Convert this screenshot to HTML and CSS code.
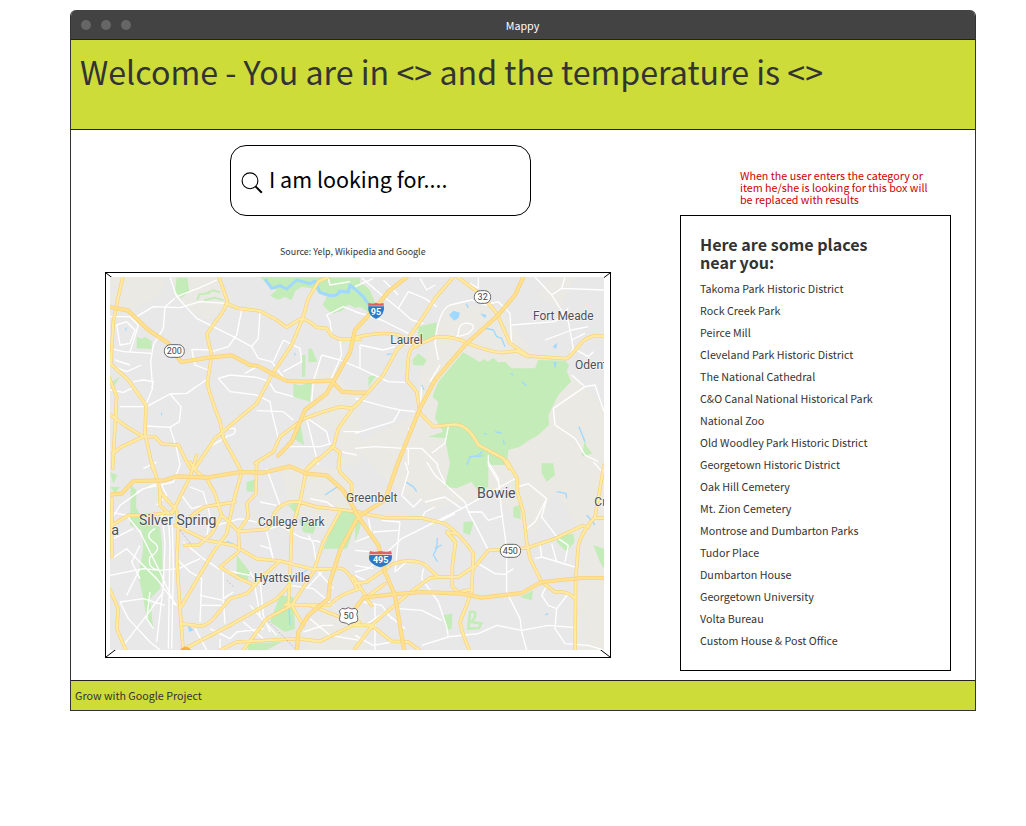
FILE: index.html
```html
<!DOCTYPE html>
<html lang="en">
<head>
<meta charset="utf-8">
<title>Mappy</title>
<link rel="stylesheet" href="styles.css">
</head>
<body>
<div class="window">
  <div class="titlebar">
    <div class="dots"><i class="dot"></i><i class="dot"></i><i class="dot"></i></div>
    <span class="window-title">Mappy</span>
  </div>
  <header class="banner"><h1 class="welcome">Welcome - You are in &lt;&gt; and the temperature is &lt;&gt;</h1></header>
  <main class="content">
    <section class="left">
      <div class="search">
        <svg class="search-icon" width="22" height="22" viewBox="0 0 22 22"><circle cx="9" cy="8.8" r="7.9" fill="none" stroke="#000" stroke-width="1.1"/><path d="M14.5 14.4L20.8 20.7" stroke="#000" stroke-width="2"/></svg>
        <span class="search-text">I am looking for....</span>
      </div>
      <p class="source">Source: Yelp, Wikipedia and Google</p>
      <div class="map-frame">
        <svg class="map" width="504" height="384" viewBox="0 0 504 384">
          <path d="M0 0L504 384M0 384L504 0" stroke="#000" stroke-width="1"/>
          <svg x="4" y="4" width="494" height="373" viewBox="30 36 1482 1119">
            <defs>
              <g id="roads">
                <path d="M70 30L55 95 40 170 33 290M355 30L382 108Q370 145 350 165L320 208 335 270 322 355Q325 375 345 430L360 470 370 520 420 610M378 115L415 130 480 138 530 165 560 187 600 162Q620 160 650 187L680 190 695 212 720 223H780M685 36L655 50 625 100 608 160 575 240 515 330 470 415 345 520 285 610M25 290L85 345 138 420 135 505 158 610M25 330L50 395 45 480 38 610M25 445L80 485 130 515 165 515 185 537 235 540 270 610M38 565L65 545 130 515M780 410L755 430 720 425 665 442 610 462 540 515 520 560 465 595M755 435L715 490 700 545 625 610M695 545L720 562 715 610"/>
                <g transform="translate(765 0)"><path d="M0 218Q80 198 130 210L185 240Q200 235 240 217Q290 210 345 237Q400 260 440 263L485 258 520 275M0 425L85 330 125 255 160 220 205 155 240 100 295 36M300 30L380 90 425 145 465 235 520 273 635 281Q650 270 675 238T747 214M185 245Q165 240 160 280L155 345 185 380 195 445 235 485 300 478Q340 480 370 540L445 580 462 610"/></g>
                <g transform="translate(0 591)"><path d="M36 110V285M155 0L180 80V130L205 155M180 90L230 145M35 190L85 160 140 160 220 150M290 -20L270 45 230 125 215 155M270 0L290 30 320 50 345 95 365 160 415 208 418 265M410 0L425 30 400 120 380 215 340 270 240 440M470 0L468 95 440 125 445 165 415 208 490 203Q515 200 520 160Q540 115 600 120L650 135 780 150M650 -10L620 20 600 120 575 200 570 340 565 430M715 0L720 30 755 65V110M230 150L235 200 230 290 240 440 250 570M225 190L320 235 400 250 470 290 540 297 640 322 710 320Q740 310 770 380M255 250H295L335 215 365 160M270 165L310 135 405 120M415 270L360 315 420 350 465 370 440 395 390 410 340 470Q310 500 285 490L245 485M255 560L390 490 530 410Q570 370 570 360M540 297L480 350 465 370M350 570L410 540 590 530M595 530L660 538 780 480M720 150L670 240 640 330 575 430 500 470 430 564M555 428L690 430Q710 400 780 380M575 430L610 490M630 430L720 465 780 490M28 380L55 440 50 500 80 570"/></g>
                <g transform="translate(765 591)"><path d="M0 150L90 167 200 168 270 185Q320 220 355 275L350 390 315 480 325 520 345 570M302 215L275 210 302 240 292 310V375L310 390 350 383M455 -5L487 50V90L505 150 515 240 525 290 560 360 600 390Q640 385 660 410M355 320L400 265 440 263 515 258 600 230 680 192 700 195M747 10L720 165Q680 210 670 250L662 350 660 570M722 168H750M0 365L35 360 110 308Q165 285 210 308L250 345H310L355 315M250 345L225 348 160 395 60 480 0 560M0 490H50L110 538 160 540 200 570M-5 345L35 405M35 405L90 365M30 405L50 430"/></g>
              </g>
              <g id="highways">
                <path d="M25 125L85 137 145 195 205 235 230 275 245 291 330 277 395 271 450 300 475 303 515 325 560 348 620 350 695 347 725 380 765 383H795M920 36L865 80 825 130 765 195 750 262 700 350 680 385 615 435 575 530 535 572"/>
                <path d="M1270 36L1245 90 1195 150 1095 240 1005 345 960 430 895 591 855 705 775 755 720 856 690 951 685 1001 625 1051 595 1101 590 1165"/>
                <g transform="translate(0 591)"><path d="M30 98L65 95 100 57 195 55 230 43 320 47 420 30 490 32 570 13 620 35 680 40 730 85 780 170"/></g>
                <g transform="translate(765 591)"><path d="M0 150L70 250 90 330 120 400 148 570M0 440L25 407 110 397 200 390 320 395 380 407 500 393 560 360 680 348H750"/></g>
              </g>
            </defs>
            <rect x="30" y="36" width="1482" height="1119" fill="#e8e8e8"/>
            <g class="land">
              <path d="M210 36H355L380 110 330 165Q270 140 225 95ZM30 36H200L180 90 110 130 30 115ZM640 320H700L780 390V600H720V500L650 480Z"/>
              <path d="M1040 115L1200 130 1320 290 1400 590 1300 820 1190 690 1000 730 870 660 760 540 940 450 960 330Z"/>
              <path d="M1360 36H1425L1380 130 1310 90ZM1410 320L1512 430V1155H1430V780L1340 640 1290 560Z"/>
              <path d="M540 600L730 610 780 690 690 770 570 740ZM620 1070L790 1030 800 1155H620Z"/>
            </g>
            <g class="park">
              <path d="M230 38H262L268 80 245 98 225 80ZM480 36L780 38V125L765 128 745 118 725 138 695 146 668 120 680 95 660 88 645 72 605 65 585 78 575 106 555 95 535 104 510 92 530 75 505 62ZM110 215L125 222 135 215 155 228V252L110 250ZM625 252L635 250 652 290 625 292ZM606 270H616V335H606ZM580 355L600 362 635 352 630 410 580 395ZM600 470L612 540 580 520ZM30 355L60 335 45 360Z"/>
              <path d="M292 105L298 88 330 84M320 84L340 76 360 82M312 106L345 98 370 106" fill="none" stroke="#c3ecb8" stroke-width="6"/>
              <g transform="translate(765 0)"><path d="M0 50L20 55 45 75 75 150 45 145 0 115ZM190 185L245 172 240 212 208 230 188 210ZM172 285L190 265 215 285 205 302 175 300ZM40 335L65 330 40 365ZM325 262L375 292 385 282 398 290 415 278 430 292 450 290 470 310H540L550 285 630 287 642 300 635 318 648 350 610 390 580 450 550 510 515 530 495 545 460 555 455 600H400V665L370 680 350 650 305 670 270 665 285 595 270 520 220 515 265 500 240 460 250 410 232 395 250 350ZM690 525L695 545 712 565 680 575ZM580 445L582 480 550 510ZM560 595H595L600 630 575 650 560 625Z"/></g>
              <g transform="translate(0 591)"><path d="M92 70L110 85 108 135 130 180 180 195 185 235 188 330 180 380 150 410 160 500 140 470 130 410 115 340 130 260 125 205 90 190ZM30 30L52 40 40 65ZM30 75H60L45 92ZM440 60L465 52 460 90 440 88ZM565 130L600 120 595 165ZM595 170L650 185 640 215 610 210ZM715 150H780L740 260H670ZM410 280L450 330 440 360 410 345ZM540 400L580 405 585 500 555 510 510 480ZM440 545L545 540 500 564H445Z"/></g>
              <g transform="translate(765 591)"><path d="M0 180L20 160 15 200 0 240ZM325 180L357 178 345 218 325 212ZM475 135L497 128V172L475 165ZM605 220L655 215 658 240 635 270 605 240ZM715 250L747 260V320L735 300ZM495 405L535 385 530 415ZM262 460L292 455 290 500 275 505Z"/><path d="M345 450Q365 445 360 465L350 480 378 484 372 498 340 500Z" fill="none" stroke="#c3ecb8" stroke-width="8"/></g>
            </g>
            <g class="water"><path d="M495 42L515 70 540 62 560 72 590 45 630 56 645 48 660 82 690 92 710 90 720 78 745 82 750 60 765 72 790 95 810 125"/><path d="M875 266L860 269M1098 116L1105 128M1158 190L1180 195 1190 215 1205 220 1215 245M1012 818L1010 850 1000 870 1012 890M1005 850L1025 840M915 650L940 665 950 680M1233 325L1240 330M1265 350L1280 362M565 1000L570 1080M585 940L620 915M675 690L720 660M1370 680L1398 685 1400 700M1460 750L1485 780M1437 485L1455 530M965 360L972 375M1150 505L1160 507M1185 500L1205 505M1210 525L1213 538M1335 1050L1345 1046M380 828L400 838"/><path d="M1100 600L1110 575 1130 573 1148 560M1130 575L1150 572"/></g>
            <path d="M1047 150L1060 137 1080 143 1075 160 1062 167ZM1140 145L1160 150 1155 160ZM1358 245L1372 233 1368 252ZM1360 292L1370 290 1366 312ZM582 262L588 268 583 272ZM75 190L80 187 78 200ZM182 446L187 442 185 454ZM262 1080L282 1095 268 1100Z" fill="#a0d8ff"/>
            <g class="streets">
              <path d="M210 36L230 95 290 160 400 215 455 245 475 280 515 290 560 350M230 95L300 68 350 45M110 155L160 125 240 128 300 110 375 115M225 100L195 125 190 190 160 240 152 290 158 370 135 425M425 135L410 210 385 245 335 260M480 138L475 220 455 245M275 253L335 255M275 253L285 300 325 315M322 342L260 385 210 387 140 425M355 340L390 330 470 337 510 350M355 340L390 380 470 390 510 410 515 440 530 500 535 520M470 437L550 440 580 465M210 387L243 425 238 470 210 487 135 483M210 487L230 550 240 600M370 490L405 490Q410 510 385 512L330 545M550 225L600 250 605 290 550 320M550 225L520 290M720 225L725 270 690 350M665 270L640 350 635 410M665 270L720 285 780 310M620 462L640 540 655 600M625 462L680 500 690 540M555 545H660L695 535M30 155L90 155 115 180 100 230 90 260M50 180L80 170 105 195 90 235 60 240ZM30 250L70 260 155 265M30 300L80 320 125 300M30 375L70 382 95 370M60 425L130 425M130 345L160 350 155 370M100 350L130 345M690 170L680 150 730 125 780 145M690 170L695 210M730 500H780M720 560L770 570M510 355L525 380 580 395M435 325L480 300 515 325M45 285L90 300M685 42L690 60 750 50"/>
              <g transform="translate(765 0)"><path d="M20 38L80 90 130 130 170 165 205 175M130 130L160 80 210 100 245 125M195 40L215 75 240 60M0 140L80 165 160 205M0 65L55 40M85 45L130 90M15 240L85 255 120 245M15 240V310L100 350 150 352M0 400L90 425 135 435 180 440M135 435L115 470 0 505M0 550L60 545 145 550 200 550 250 600M280 485L270 535 230 565M160 550V600M310 215L340 205Q370 180 340 175T310 210L290 225M250 285L240 235Q250 135 285 120L350 105 390 120 430 110 465 145 470 240M225 350L255 300M540 36L590 90 640 170 655 250 700 275 715 260M590 90L620 70 747 75M630 36L620 70M470 180L600 170 640 130M570 225L650 195 700 185M655 250L640 280M690 365L595 430 600 480 660 520 690 570 730 590M690 365L720 360 747 440M200 365L195 430M650 225L690 205M650 330L690 365M370 36V70L345 55M160 490L170 500M400 570V600L430 650M245 600L270 655"/></g>
              <g transform="translate(0 591)"><path d="M30 150L80 160 120 210 180 330 225 430M30 340L130 320 180 325 235 320M35 290L80 260 170 350 230 430M30 235L100 200M170 130L200 100 185 70M185 145L195 240 190 370 170 540M205 160L210 250 205 560M217 190L220 320 215 560M60 420L130 410 195 430M60 420L85 470 150 540 180 564M70 550L140 460 190 390M80 400L120 320M165 200Q130 220 160 240Q190 260 150 285Q140 320 180 325M150 390L140 470 160 500M250 240L310 290 355 320 400 330 450 340M230 290L270 330 305 350 300 480M235 320L300 290M300 400L370 415 375 485M300 430H370M285 500L320 564M330 500L390 530 410 510 490 500M370 330V410L400 390M480 350L490 460 510 510M450 330L475 370M465 375L480 460M320 230L350 190 420 170 470 180M270 75L310 90 330 160 320 230M245 100L275 140 310 130M240 10L220 60 130 80 60 130M130 20L170 0M500 20L540 130M500 210L515 270 520 295M510 200L540 190 600 225 660 240M480 120L530 130M480 250L510 260 520 290M625 220L640 245 650 310M570 370L640 380 700 430M450 430L530 520M360 530V564M430 480L490 530M620 380L665 330M630 470L690 520 780 535M655 330L700 380M630 110L680 120 720 150M670 490H700M610 510L670 490M40 240L30 150M60 130L30 180M120 250L95 300 120 350M110 90L180 60"/></g>
              <g transform="translate(765 591)"><path d="M0 330L40 320 140 230 320 140 480 50M150 0L160 30 140 100 175 135 200 110M215 0L240 40 330 120 340 150 380 150 400 175 445 160M400 0L430 50 440 150 455 260 455 320M240 135L210 150 200 170M210 120L270 105 320 140M340 150L375 215 400 265M370 305L420 335 450 337 475 320M455 320V390L495 470 500 510 515 564M487 75L520 65 575 110 560 165 610 230 640 250M575 110L540 180 515 200M275 525L370 515 425 490 500 505 580 490 660 497M575 370L560 400 580 430 605 440 600 500 630 545 700 550 745 564M605 440L640 395M555 245L560 285 610 300 660 315M560 285L540 290M590 245L605 300M640 250L630 300M715 0L747 35M205 320L200 350 250 420 275 495 280 525 200 550M130 440L200 445 260 475M80 175L135 180 130 230 120 330M40 170L50 220 0 240M55 210L130 205M0 265L60 270M0 340L40 360M25 420L80 430 110 470M30 490L90 450 150 500M0 520L55 550 110 540M160 295L120 330M60 430V564M250 180L300 155M0 310L55 320"/></g>
            </g>
            <use href="#roads" class="casing minor-casing"/><use href="#roads" class="fill-road minor-fill"/>
            <use href="#highways" class="casing major-casing"/><use href="#highways" class="fill-major"/>
            <circle cx="257" cy="1163" r="18" fill="#fbb040"/>
            <path d="M240 795L275 840M380 945L400 965M505 1070L585 1150" stroke="#aaa" stroke-width="2" stroke-dasharray="6 5"/>
            <g class="shields">
              <rect x="193" y="239" width="60" height="38" rx="18"/><rect x="1123" y="77" width="49" height="38" rx="18"/><rect x="1201" y="838" width="61" height="39" rx="19"/>
              <path d="M726 1030Q735 1035 745 1028Q755 1035 766 1030L773 1038Q768 1048 773 1058Q776 1072 760 1073Q752 1074 746 1079Q740 1074 732 1073Q716 1072 719 1058Q724 1048 718 1038Z"/>
            </g>
            <g class="shield-text"><text x="223" y="268">200</text><text x="1148" y="106">32</text><text x="1231" y="867">450</text><text x="746" y="1062">50</text></g>
            <g class="interstate">
              <path d="M805 124H852Q855 150 828 162Q801 150 805 124Z" fill="#2d79c7"/><path d="M806 113Q817 118 828 113Q840 118 850 113L852 122H804Z" fill="#df6262"/>
              <path d="M808 870H875Q882 894 841 907Q800 894 808 870Z" fill="#2d79c7"/><path d="M810 858Q825 863 841 858Q858 863 873 858L876 868H807Z" fill="#df6262"/>
              <text x="828" y="151">95</text><text x="842" y="894">495</text>
            </g>
            <g class="place">
              <text x="871" y="238" textLength="97" lengthAdjust="spacingAndGlyphs">Laurel</text><text x="1299" y="164" textLength="182" lengthAdjust="spacingAndGlyphs">Fort Meade</text><text x="1425" y="313">Odenton</text>
              <text x="738" y="710" textLength="154" lengthAdjust="spacingAndGlyphs">Greenbelt</text><text x="474" y="784" textLength="200" lengthAdjust="spacingAndGlyphs">College Park</text><text x="462" y="950" textLength="168" lengthAdjust="spacingAndGlyphs">Hyattsville</text><text x="1483" y="722">Crofton</text>
              <text class="city" x="117" y="781" textLength="232" lengthAdjust="spacingAndGlyphs">Silver Spring</text><text class="city" x="1131" y="700" textLength="116" lengthAdjust="spacingAndGlyphs">Bowie</text><text class="city" x="34" y="811">a</text>
            </g>
          </svg>
        </svg>
      </div>
    </section>
    <aside class="right">
      <p class="note">When the user enters the category or<br>item he/she is looking for this box will<br>be replaced with results</p>
      <div class="places">
        <h2 class="places-title">Here are some places<br>near you:</h2>
        <ul class="places-list">
          <li>Takoma Park Historic District</li><li>Rock Creek Park</li><li>Peirce Mill</li><li>Cleveland Park Historic District</li><li>The National Cathedral</li><li>C&amp;O Canal National Historical Park</li><li>National Zoo</li><li>Old Woodley Park Historic District</li><li>Georgetown Historic District</li><li>Oak Hill Cemetery</li><li>Mt. Zion Cemetery</li><li>Montrose and Dumbarton Parks</li><li>Tudor Place</li><li>Dumbarton House</li><li>Georgetown University</li><li>Volta Bureau</li><li>Custom House &amp; Post Office</li>
        </ul>
      </div>
    </aside>
  </main>
  <footer class="footer">Grow with Google Project</footer>
</div>
</body>
</html>
```

FILE: styles.css
```css
* { box-sizing: border-box; }
body { margin: 0; padding: 10px 0 0 70px; background: #fff; color: #333; font-family: "Noto Sans CJK SC", "Noto Sans", sans-serif; font-size: 10.73px; }
h1, h2, p, ul { margin: 0; padding: 0; font-weight: 400; }
.window { width: 906px; height: 701px; display: flex; flex-direction: column; border: 1px solid #333; border-top: 0; border-radius: 6px 6px 0 0; overflow: hidden; }
.titlebar { height: 30px; flex: none; display: grid; grid-template-columns: 1fr auto 1fr; align-items: center; background: #434343; border-bottom: 1px solid #222; }
.dots { display: flex; gap: 10px; padding-left: 10px; }
.dot { width: 10px; height: 10px; border-radius: 50%; background: #666; }
.window-title { color: #fff; line-height: 16px; padding: 2px 1px 0 0; }
.banner { height: 90px; flex: none; background: #cddc39; border-bottom: 1px solid #222; padding: 9px 0 0 9px; }
.welcome { font-size: 32.2px; line-height: 44px; white-space: nowrap; }
.content { height: 550px; flex: none; display: flex; }
.left { width: 609px; padding: 15px 0 0 34px; }
.search { width: 301px; height: 71px; margin-left: 125px; border: 1px solid #000; border-radius: 16px; display: flex; padding-left: 10px; color: #000; }
.search-icon { margin-top: 26px; flex: none; }
.search-text { font-size: 21.47px; line-height: 30px; margin: 18px 0 0 6px; white-space: nowrap; }
.source { font-size: 8.94px; line-height: 14px; margin: 29px 0 0 175px; height: 27px; }
.map-frame { width: 506px; height: 386px; border: 1px solid #000; }
.map { display: block; }
.note { color: #c00; line-height: 12px; margin: 40px 0 0 60px; height: 45px; white-space: nowrap; }
.places { width: 271px; height: 456px; border: 1px solid #000; padding: 19px 19px; }
.places-title { font-size: 16.1px; font-weight: 700; line-height: 18px; }
.places-list { list-style: none; padding-top: 7px; }
.places-list li { line-height: 22px; white-space: nowrap; }
.footer { height: 31px; flex: none; background: #cddc39; border-top: 1px solid #222; border-bottom: 1px solid #222; padding-left: 4px; line-height: 29px; }
.land { fill: #ebe9e3; }
.park { fill: #c3ecb8; }
.water { fill: none; stroke: #a0d8ff; stroke-width: 4; stroke-linejoin: round; }
.water path:first-child { stroke-width: 9; }
.streets { fill: none; stroke: #fff; stroke-width: 4; stroke-linejoin: round; }
.casing, .fill-road, .fill-major { fill: none; stroke-linejoin: round; stroke-linecap: round; }
.casing { stroke: #fad07c; }
.minor-casing { stroke-width: 10.5; }
.minor-fill { stroke: #ffeba1; stroke-width: 6.5; }
.major-casing { stroke-width: 12.5; }
.fill-major { stroke: #ffe18f; stroke-width: 8; }
.shields { fill: #fff; stroke: #666; stroke-width: 3; }
.shield-text { font: 27px Roboto, sans-serif; fill: #444; text-anchor: middle; }
.interstate text { font: 700 27px Roboto, sans-serif; fill: #fff; text-anchor: middle; }
.place { font: 36px Roboto, sans-serif; fill: #4c5058; stroke: #fff; stroke-width: 4; stroke-opacity: .65; paint-order: stroke; }
.place .city { font-size: 43px; }
```
